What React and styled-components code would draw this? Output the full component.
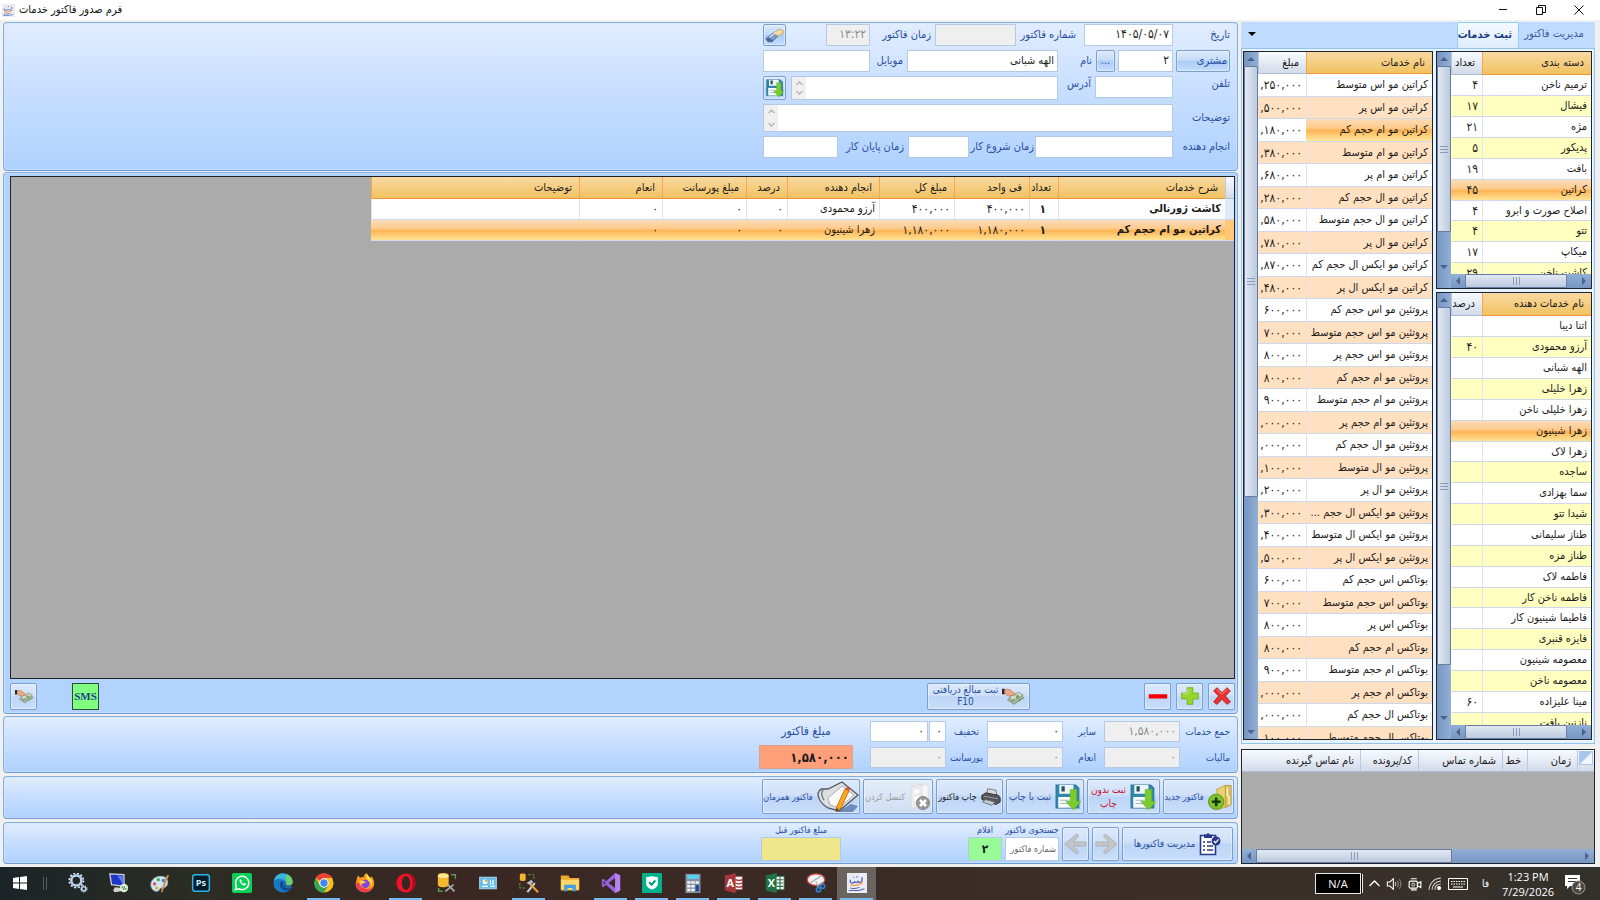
import React from "react";
import styled, { createGlobalStyle, css } from "styled-components";

const font = `"DejaVu Sans Condensed", "DejaVu Sans", sans-serif`;
const selected = "linear-gradient(#fcdcb8, #fdcb8c 40%, #feb556 52%, #fecb74 72%, #ffe89c)";
const gold = "linear-gradient(#f9d9a2, #f1c261)";
const silver = "linear-gradient(#f7fafe, #e6ebf4 50%, #d2dae8)";
const panelBlue = "linear-gradient(#e1edff, #c8dfff 45%, #afd1ff)";
const glass = "linear-gradient(#dbe9fb, #c6dcf8 45%, #abcdf7 52%, #c3dcfb)";
const paleGlass = "linear-gradient(#dce9fb, #cfe0f8 45%, #bdd5f7 52%, #c9defa)";

const GlobalStyle = createGlobalStyle`
  * { box-sizing: border-box; }
  body { margin: 0; background: #f0f0f0; font: 11px/16px ${font}; color: #1b1b1b; }
  button, input, textarea { font: inherit; color: inherit; margin: 0; }
  button { cursor: default; }
`;

/* ---------- window shell ---------- */

const Window = styled.div`
  height: 100vh;
  display: flex;
  flex-direction: column;
  overflow: hidden;
`;

const TitleBar = styled.header`
  height: 20px;
  flex: none;
  display: flex;
  align-items: center;
  background: #fff;
  padding: 0 2px;
`;

const WindowTitle = styled.h1`
  margin: 0 auto 0 4px;
  font: 11px/16px ${font};
  color: #111;
`;

const CaptionButton = styled.button`
  width: 38px;
  height: 18px;
  padding: 0;
  border: 0;
  background: none;
  display: grid;
  place-items: center;
`;

const Body = styled.div`
  flex: 1;
  min-height: 0;
  display: flex;
  gap: 3px;
  padding: 2px 5px 3px 3px;
`;

const Main = styled.main`
  flex: 1;
  min-width: 0;
  display: flex;
  flex-direction: column;
`;

const Panel = styled.section`
  flex: none;
  border: 1px solid #84aede;
  border-bottom-color: #6d9bd6;
  border-radius: 4px;
  background: ${panelBlue};
  box-shadow: inset 0 0 0 1px #d5e6ff88;
`;

/* ---------- form ---------- */

const FormPanel = styled(Panel)`
  height: 149px;
  padding: 1px 7px 0;
  display: flex;
  flex-direction: column;
  gap: 4px;
`;

const FormRow = styled.div`
  display: flex;
  align-items: ${(p) => p.$align || "center"};
  height: ${(p) => p.$h || 22}px;
`;

const FormLabel = styled.label`
  flex: none;
  width: ${(p) => p.$w}px;
  padding-right: ${(p) => p.$pad || 0}px;
  color: #2b4f9e;
  white-space: nowrap;
`;

const TextBox = styled.input`
  flex: none;
  width: ${(p) => p.$w}px;
  height: ${(p) => p.$h || 22}px;
  padding: 0 3px 2px;
  border: 1px solid #b4c9e6;
  border-radius: 0;
  background: #fff;
  text-align: right;
  direction: ${(p) => (p.$num ? "ltr" : "rtl")};
  font-size: ${(p) => (p.$num ? 12 : 11)}px;
  outline: none;
  &:disabled { background: #efefef; color: #8a8a8a; }
`;

const MemoFrame = styled.div`
  flex: none;
  width: ${(p) => p.$w}px;
  height: 100%;
  display: flex;
  border: 1px solid #b4c9e6;
  background: #fff;
`;

const MemoText = styled.textarea`
  flex: 1;
  min-width: 0;
  border: 0;
  padding: 2px;
  resize: none;
  overflow: hidden;
  background: none;
  outline: none;
`;

const MemoArrows = styled.span`
  width: 14px;
  background: #f0f0f0;
  display: flex;
  flex-direction: column;
  justify-content: space-between;
  align-items: center;
  padding: 4px 0;
`;

const GlassButton = styled.button`
  flex: none;
  width: ${(p) => p.$w}px;
  height: ${(p) => p.$h}px;
  padding: 0 2px;
  display: flex;
  align-items: center;
  justify-content: ${(p) => p.$align || "center"};
  gap: 4px;
  border: 1px solid #7d9ec9;
  border-radius: 2px;
  background: ${(p) => (p.$pale ? paleGlass : glass)};
  box-shadow: inset 0 0 0 1px #ffffff66;
  color: ${(p) => p.$color || "#2b4f9e"};
  white-space: nowrap;
  overflow: hidden;
  line-height: ${(p) => p.$line || 12}px;
  font-size: ${(p) => p.$size || 11}px;
  &:disabled { color: #9a9a9a; background: linear-gradient(#e3ecf8, #cfdff4); }
`;

const PushEnd = styled.span`
  margin-right: auto;
  display: flex;
  gap: ${(p) => p.$gap || 0}px;
`;

/* ---------- grids ---------- */

const InvoicePanel = styled(Panel)`
  flex: 1;
  min-height: 0;
  margin: 1px 0 2px;
  display: flex;
  flex-direction: column;
  padding: 3px 2px 0 6px;
  background: #b3d3ff;
`;

const InvoiceArea = styled.div`
  flex: 1;
  min-height: 0;
  overflow: hidden;
  border: 1px solid #222;
  background: #ababab;
`;

const ActionBar = styled.div`
  flex: none;
  height: 34px;
  display: flex;
  align-items: center;
  gap: 5px;
`;

const Table = styled.table`
  table-layout: fixed;
  border-collapse: separate;
  border-spacing: 0;
  width: ${(p) => (p.$w ? `${p.$w}px` : "100%")};
`;

const HeadCell = styled.th`
  height: ${(p) => p.$h || 22}px;
  padding: 0 ${(p) => p.$pad || 7}px 0 0;
  text-align: right;
  font-weight: 400;
  white-space: nowrap;
  overflow: hidden;
  ${(p) =>
    p.$gold
      ? css`background: ${gold}; border-bottom: 1px solid #f2953a; border-left: 1px solid #f4a650;`
      : css`background: ${silver}; border-bottom: 1px solid #a9bcd8; border-left: 1px solid #b5c9e4;`}
`;

const Row = styled.tr`
  height: 21px;
  background: ${(p) => (p.$selected ? selected : p.$tint || "#fff")};
  ${(p) => p.$uneven && css`&:nth-child(7n) { height: 20px; }`}
  ${(p) => p.$wide && css`height: 23px; &:nth-child(even) { height: 22px; }`}
`;

const Cell = styled.td`
  padding: 0 ${(p) => p.$pad || 4}px 0 0;
  line-height: 16px;
  white-space: nowrap;
  overflow: hidden;
  text-overflow: ${(p) => (p.$num ? "clip" : "ellipsis")};
  text-align: right;
  border-bottom: 1px solid #cfd7ea;
  border-left: 1px solid ${(p) => (p.$clean ? "transparent" : "#dde3f0")};
  direction: ${(p) => (p.$num ? "ltr" : "rtl")};
  font-size: ${(p) => (p.$num ? 12 : 11)}px;
  font-weight: ${(p) => (p.$bold ? 700 : 400)};
  ${(p) => p.$fill && css`background: ${p.$fill};`}
`;

const MarkerCell = styled.td`
  background: ${(p) => (p.$selected ? "#ffc777" : "#dfeaf8")};
  border-bottom: 1px solid #cfd7ea;
`;

const GridBox = styled.div`
  display: flex;
  min-height: 0;
  border: 1px solid #1c2430;
  background: #fff;
  ${(p) => (p.$w ? `width: ${p.$w}px;` : "")}
  ${(p) => (p.$h ? `flex: none; height: ${p.$h}px;` : "flex: 1;")}
`;

const ServicesBox = styled(GridBox)`
  flex: none;
`;

const GridColumn = styled.div`
  flex: 1;
  min-width: 0;
  display: flex;
  flex-direction: column;
`;

const Viewport = styled.div`
  flex: 1;
  min-height: 0;
  overflow: hidden;
  background: ${(p) => p.$bg || "#fff"};
`;

const Track = styled.div`
  flex: none;
  display: flex;
  direction: ltr;
  align-items: stretch;
  ${(p) =>
    p.$vertical
      ? css`width: 14px; flex-direction: column; background: linear-gradient(90deg, #7795c2, #92afd6);`
      : css`height: 14px; background: linear-gradient(#92afd6, #7795c2);`}
`;

const TrackArrow = styled.span`
  flex: none;
  width: 14px;
  height: 14px;
  display: grid;
  place-items: center;
`;

const Thumb = styled.span`
  flex: ${(p) => p.$flex} 1 0;
  display: grid;
  place-items: center;
  border: 1px solid #687ca3;
  border-radius: 1px;
  background: ${(p) =>
    p.$vertical ? "linear-gradient(90deg, #e2e9f3, #bccadf)" : "linear-gradient(#e2e9f3, #bccadf)"};
`;

const TrackRest = styled.span`
  flex: ${(p) => p.$flex} 1 0;
`;

const Corner = styled.span`
  flex: none;
  height: 14px;
`;

/* ---------- side column ---------- */

const Side = styled.aside`
  flex: none;
  width: 354px;
  display: flex;
  flex-direction: column;
  gap: 5px;
`;

const TabPanel = styled.section`
  flex: 1;
  min-height: 0;
  display: flex;
  flex-direction: column;
`;

const TabStrip = styled.div`
  flex: none;
  height: 26px;
  display: flex;
  align-items: stretch;
  background: #bfdbff;
`;

const Tab = styled.button`
  width: ${(p) => p.$w}px;
  padding: 0 6px 2px 0;
  border: 0;
  background: none;
  color: #3c5ca0;
  white-space: nowrap;
  ${(p) =>
    p.$active &&
    css`
      background: linear-gradient(#f4f9ff, #dfecfd);
      border: 1px solid #8fd0ee;
      border-bottom: 0;
      border-radius: 2px 2px 0 0;
      font-weight: 700;
      color: #1b3c86;
    `}
`;

const TabMenu = styled.button`
  margin: 0 auto 0 5px;
  width: 12px;
  padding: 0;
  border: 0;
  background: none;
`;

const TabBody = styled.div`
  flex: 1;
  min-height: 0;
  display: flex;
  gap: 3px;
  padding: 2px 2px 3px 1px;
  border: 1px solid #8fc3ea;
  background: #e9f3ff;
`;

const Stack = styled.div`
  width: 156px;
  display: flex;
  flex-direction: column;
  gap: 3px;
`;

/* ---------- lower panels ---------- */

const TotalsPanel = styled(Panel)`
  height: 57px;
  margin-bottom: 3px;
  padding: 4px 7px 0;
  display: flex;
`;

const TotalsGrid = styled.div`
  display: grid;
  grid-template-columns: 50px 76px 41px 76px 41px 76px;
  grid-auto-rows: 21px;
  row-gap: 5px;
  align-items: center;
  & > label { font-size: 10px; }
`;

const Pair = styled.span`
  display: flex;
  gap: 1px;
`;

const InvoiceTotal = styled.label`
  width: 94px;
  margin-right: 17px;
  display: flex;
  flex-direction: column;
  align-items: center;
  gap: 4px;
  font-size: 12px;
  line-height: 20px;
  color: #2b4f9e;
`;

const TotalBox = styled.input`
  width: 100%;
  height: 24px;
  padding: 0 3px;
  border: 1px solid #dca08e;
  background: #ffa07a;
  color: #1b1b1b;
  font-size: 13px;
  font-weight: 700;
  text-align: right;
  direction: ltr;
`;

const ButtonsPanel = styled(Panel)`
  height: 43px;
  margin-bottom: 3px;
  display: flex;
  align-items: center;
  gap: 3px;
  padding: 0 3px 2px;
`;

const FooterPanel = styled(Panel)`
  height: 42px;
  display: flex;
  align-items: flex-end;
  gap: 3px;
  padding: 0 4px 2px;
`;

const Stat = styled.label`
  display: flex;
  flex-direction: column;
  align-items: center;
  width: ${(p) => p.$w}px;
  margin-right: ${(p) => p.$push || 0}px;
  color: #2b4f9e;
  font-size: 9px;
  line-height: 13px;
  white-space: nowrap;
`;

const StatBox = styled.input`
  width: 100%;
  height: 24px;
  padding: 0 2px;
  border: 1px solid #b4c9e6;
  background: ${(p) => p.$bg || "#fff"};
  color: #1b1b1b;
  text-align: ${(p) => p.$align || "right"};
  font-size: ${(p) => p.$size || 9}px;
  font-weight: ${(p) => (p.$bold ? 700 : 400)};
  &::placeholder { color: #666; }
`;

const SmsButton = styled.button`
  width: 27px;
  height: 27px;
  padding: 0;
  border: 1px solid #2b4a38;
  background: #80ff80;
  color: #1d3f8c;
  font: 700 11px/16px "Liberation Serif", serif;
`;

/* ---------- taskbar ---------- */

const Taskbar = styled.footer`
  flex: none;
  height: 33px;
  display: flex;
  align-items: stretch;
  background: linear-gradient(90deg, #1b2427, #2b2d24 12%, #3a2723 28%, #3a2a25 50%, #3b3029 78%, #33312b);
  color: #fff;
`;

const TaskButton = styled.button`
  width: ${(p) => p.$w || 41}px;
  padding: 0 4px;
  border: 0;
  background: none;
  display: flex;
  flex-direction: column;
  align-items: center;
  justify-content: space-between;
  ${(p) => p.$active && css`background: linear-gradient(#6a645f, #6a645f) center / 39px 100% no-repeat;`}
  &::after {
    content: "";
    width: 33px;
    height: 2px;
    background: ${(p) => (p.$open ? "#76b9ed" : "transparent")};
  }
  & > svg { margin-top: ${(p) => p.$drop || 6}px; }
`;

const Separator = styled.span`
  width: 4px;
  height: 13px;
  margin: 10px 10px 0 4px;
  border: solid #555a58;
  border-width: 0 1px;
`;

const Tray = styled.div`
  margin-left: auto;
  display: flex;
  align-items: center;
  gap: 6px;
  padding-right: 14px;
  font: 12px/15px "Open Sans", sans-serif;
`;

const Battery = styled.span`
  width: 46px;
  height: 21px;
  display: grid;
  place-items: center;
  border: 1px solid #e8e8e8;
  background: #000;
  box-shadow: 2px 0 0 -1px #000, 3px 0 0 -1px #e8e8e8;
  font-size: 11px;
  margin-right: 2px;
`;

const Clock = styled.time`
  width: 56px;
  text-align: center;
  font-size: 11px;
  line-height: 15px;
  white-space: nowrap;
  margin: 0 2px 0 5px;
`;

const Lang = styled.span`
  font: 10px/15px ${font};
  margin-left: 8px;
`;

/* ---------- icons ---------- */

const Svg = ({ s = 20, w, h, vb = "0 0 24 24", children }) => (
  <svg width={w || s} height={h || s} viewBox={vb} fill="none" aria-hidden="true" style={{ flex: "none" }}>
    {children}
  </svg>
);

const Floppy = ({ s }) => (
  <Svg s={s}>
    <path d="M1 1h18l3 3v18H1z" fill="#2f88aa" stroke="#2a7596" />
    <path d="M4 1h13v8H4z" fill="#eef5f9" />
    <path d="M6 2h3v5H6z" fill="#24505f" />
    <path d="M3 12h13v10H3z" fill="#f8fbfc" />
    <path d="M5 15h8M5 18h8" stroke="#9bb8c4" />
    <path d="M14 5h6v11h4l-7 8-7-8h4z" fill="#7ccb2c" stroke="#66b31e" strokeWidth=".5" />
  </Svg>
);

const Eraser = () => (
  <Svg s={19}>
    <path d="M1 16l9-7 7 3-8 8H4z" fill="#7d9cc8" stroke="#4a6898" />
    <path d="M1 16l4-1 5 3-1 2H4z" fill="#46679c" />
    <path d="M10 9l8-5 5 2v3l-6 4z" fill="#f3d9a0" stroke="#b99a5a" />
    <path d="M6 14l8-6" stroke="#dbe6f5" strokeWidth="1.500" />
  </Svg>
);

const Money = ({ s = 22 }) => (
  <Svg s={s} vb="0 0 24 20">
    <path d="M6 14l12-7 6 5-11 7z" fill="#a9bf9c" stroke="#66805c" strokeWidth=".8" />
    <path d="M8 11l10-5 5 3-11 7z" fill="#cfdcc4" stroke="#71896a" strokeWidth=".8" />
    <circle cx="17" cy="11" r="2" fill="#7f9a75" />
    <path d="M10 16l4-3M18 15l3-2" stroke="#57704e" />
    <path d="M0 2h3v6H0z" fill="#26262c" />
    <path d="M3 3c4-1 7 0 9 3l3 2c0 1.500-2 1.500-3 1l-3 1c-3 0-4-1-6-3z" fill="#e9a987" stroke="#b06d4f" strokeWidth=".7" />
  </Svg>
);

const RedX = () => (
  <Svg s={20}>
    <path d="M6 2l6 6 6-6 4 4-6 6 6 7-4 3-6-6-6 6-4-3 6-7-6-6z" fill="#ee3030" stroke="#b01212" />
    <path d="M6 4l6 6 6-6" stroke="#ff9a9a" />
  </Svg>
);

const GreenPlus = () => (
  <Svg s={20}>
    <path d="M8.500 2h7v6.500H22v7h-6.500V22h-7v-6.500H2v-7h6.500z" fill="#96d52c" stroke="#71ad1c" />
    <path d="M9.500 3.500v6H3.500" stroke="#d2f391" />
  </Svg>
);

const Minus = () => (
  <Svg s={20}>
    <path d="M1 10h22v5H1z" fill="#f40000" />
  </Svg>
);

const FolderPlus = () => (
  <Svg w={25} h={28} vb="0 0 26 28">
    <path d="M9 6l9-4 1 22-8 3z" fill="#ead173" stroke="#c4a94c" />
    <path d="M18 2h6v20l-6 3z" fill="#dcc064" stroke="#b99b3e" />
    <path d="M20 4v8l2 2v8" stroke="#fff4c0" strokeWidth="1.500" />
    <circle cx="8.500" cy="19" r="8" fill="#7fc22b" stroke="#5c9a1a" />
    <path d="M8.500 14.500v9M4 19h9" stroke="#17340a" strokeWidth="2.600" />
  </Svg>
);

const Printer = () => (
  <Svg s={20}>
    <path d="M8 2l10 2 1 6-12-2z" fill="#d9dadd" stroke="#666" />
    <path d="M1 10l5-3 15 3 2 3v5l-5 3L1 15z" fill="#55565a" stroke="#2c2c2e" />
    <path d="M3 11l17 3" stroke="#a5a6aa" />
    <path d="M5 15l12 3-4 4-11-4z" fill="#c5cad0" stroke="#666" />
  </Svg>
);

const Cancel = () => (
  <Svg w={22} h={28} vb="0 0 22 28">
    <path d="M2 4l11-3v21L2 26z" fill="#ececec" stroke="#dcdcdc" />
    <path d="M13 2h6v18h-6z" fill="#f7f7f7" stroke="#e2e2e2" />
    <path d="M5 7l5-1v4l-5 1zM5 14l5-1v4l-5 1z" fill="#fff" />
    <circle cx="14" cy="20" r="6.500" fill="#979797" stroke="#858585" />
    <path d="M11 17l6 6M17 17l-6 6" stroke="#fff" strokeWidth="2.500" />
  </Svg>
);

const NotePencil = () => (
  <Svg w={42} h={32} vb="0 0 42 32">
    <path d="M20 31l14-8 7 2-5 6z" fill="#6e8dbb" />
    <path d="M1 14c0-3 2-6 4-6h6L25 1l16 13-19 16-11-3c-5-3-9-7-10-13z" fill="#dcdfe2" stroke="#55585c" strokeWidth="1.300" />
    <path d="M6 9c-2 3-1 7 1 10" stroke="#7d8186" strokeWidth="1.500" />
    <path d="M11 17L25 5l12 9-15 13-9-3z" fill="#fafafa" stroke="#a9adb2" />
    <path d="M28 8l4 2-8 17-5 4 1-6z" fill="#f9a61c" stroke="#b56c0d" strokeWidth=".8" />
    <path d="M28 8l4 2 1-2-3-2z" fill="#e2562f" />
    <path d="M19.500 27l2 1.500-2.500 2.500z" fill="#3b2a1d" />
  </Svg>
);

const Checklist = () => (
  <Svg w={22} h={24} vb="0 0 22 24">
    <path d="M1.500 3.500h15v19h-15z" fill="#fff" stroke="#27388c" strokeWidth="1.600" />
    <path d="M5 2.500h2.500L9 .8l1.500 1.700H13V6H5z" fill="#27388c" />
    <path d="M4 10h2M4 14h2M4 18h2M8 10h4M8 14h6M8 18h6" stroke="#27388c" strokeWidth="1.600" />
    <circle cx="17" cy="9" r="4.500" fill="#27388c" />
    <path d="M14.800 9l1.700 1.800 3-3.500" stroke="#fff" strokeWidth="1.300" />
  </Svg>
);

const BigArrow = ({ left }) => (
  <Svg s={24}>
    <path
      d={left ? "M1 12L12 2.500c2-1 3 1 1.500 3L9 10h13v4H9l4.500 4.500c1.500 2 .5 4-1.500 3z" : "M23 12L12 2.500c-2-1-3 1-1.500 3L15 10H2v4h13l-4.500 4.500c-1.500 2-.5 4 1.500 3z"}
      fill="#c3c5c8"
      stroke="#aeb2b6"
    />
  </Svg>
);

const AppLogo = ({ s }) => (
  <Svg s={s}>
    <path d="M0 0h24v24H0z" fill="#e9ebf7" />
    <path d="M4 8v3c2 2 5 1 5-1 1 2 3 2 4 0 1 2 4 2 5-1V5M8 5v1M12 4v1.500" stroke="#4c5db0" strokeWidth="1.500" />
    <path d="M4 14c6 2 12 0 15-3" stroke="#f0a656" strokeWidth="2" />
    <path d="M4 18c4 1 8 1 11-1M2 21h12l7-2" stroke="#5563ae" strokeWidth="1.300" />
  </Svg>
);

const Chevron = ({ up, color = "#b4b4b4" }) => (
  <Svg w={7} h={5} vb="0 0 7 5">
    <path d={up ? "M.5 4l3-3 3 3" : "M.5 1l3 3 3-3"} stroke={color} strokeWidth="1.300" />
  </Svg>
);

const Triangle = ({ dir, color = "#4c628c" }) => {
  const d = { up: "M0 6h8L4 2z", down: "M0 2h8L4 6z", left: "M6 0v8L2 4z", right: "M2 0v8l4-4z" }[dir];
  return (
    <Svg s={8} vb="0 0 8 8">
      <path d={d} fill={color} />
    </Svg>
  );
};

const Grip = ({ vertical }) => (
  <Svg s={8} vb="0 0 8 8">
    <path d={vertical ? "M0 1.500h8M0 4.500h8M0 7.500h8" : "M1.500 0v8M4.500 0v8M7.500 0v8"} stroke="#8b9ab8" />
  </Svg>
);

const taskIcons = {
  start: (
    <Svg s={14} vb="0 0 14 14">
      <path d="M0 2l6-1v5.500H0zM7 .9L14 0v6.500H7zM0 7.500h6V13l-6-1zM7 7.500h7V14l-7-1z" fill="#fff" />
    </Svg>
  ),
  gears: (
    <Svg>
      <circle cx="10" cy="9" r="6" stroke="#b9d3ee" strokeWidth="3" />
      <circle cx="10" cy="9" r="8.500" stroke="#d8e7f6" strokeWidth="2" strokeDasharray="2.500 2" />
      <circle cx="19" cy="19" r="2.500" stroke="#b9d3ee" strokeWidth="2" />
      <circle cx="19" cy="19" r="4" stroke="#d8e7f6" strokeDasharray="1.500 1.300" />
    </Svg>
  ),
  remote: (
    <Svg>
      <path d="M1 1l17 1v14L3 14z" fill="#1d36c8" stroke="#cfd3da" strokeWidth="1.500" />
      <path d="M10 3l7 1v10z" fill="#5d7cf0" />
      <path d="M7 17l9 1 3 3-12 2-2-2z" fill="#d5d5d2" />
      <circle cx="18" cy="18" r="5" fill="#e8ede4" />
      <path d="M15 18l2-2M19 20l2-2M17 20l2-4" stroke="#3d9a3a" strokeWidth="1.300" />
    </Svg>
  ),
  paint: (
    <Svg>
      <path d="M1 14C1 8 7 4 13 4s9 4 8 9-6 5-8 5-1 4-5 4-7-4-7-8z" fill="#cfe4f4" stroke="#8fb4d0" />
      <circle cx="5.500" cy="13" r="2" fill="#e3493c" />
      <circle cx="10" cy="8" r="2" fill="#49a94d" />
      <circle cx="16" cy="9" r="2" fill="#3a7fd0" />
      <circle cx="8" cy="18" r="2" fill="#f0b323" />
      <path d="M13 23l5-16 3-5 2 1-3 6-5 14z" fill="#d98d3d" />
    </Svg>
  ),
  ps: (
    <Svg>
      <rect x="2" y="2" width="20" height="20" rx="3" fill="#071d2c" stroke="#2ab6e8" strokeWidth="1.800" />
      <text x="12" y="16" fontSize="11" fontWeight="700" textAnchor="middle" fill="#cdeeff" fontFamily="Open Sans, sans-serif">Ps</text>
    </Svg>
  ),
  whatsapp: (
    <Svg>
      <rect width="24" height="24" rx="2" fill="#05cf54" />
      <path d="M4 20l1.300-4A8 8 0 1 1 8.500 19z" stroke="#fff" strokeWidth="1.800" />
      <path d="M9 8c0 4 3 7 7 7l1-2-2.500-1-1 1c-1-.5-2-1.500-2.500-2.500l1-1L10.500 7z" fill="#fff" />
    </Svg>
  ),
  edge: (
    <Svg>
      <circle cx="12" cy="12" r="11.500" fill="#1b78c9" />
      <path d="M1 10C2 3 8 0 13 .5 20 1 24 6 23.500 11c-.5 4-5 5-8 4 1-2 1-5-2-6.500S4 6 1 10z" fill="#35b4dc" />
      <path d="M16 1.500c5 2 8 6 7.500 9.500S19 16 15.500 15c1-2 1-4-.5-5.500z" fill="#6bd36e" />
      <path d="M10 10c-4 3-1 12 6 11 3 0 5-2 6-4-4 2-10 0-10-3 0-1 1-2 1-3z" fill="#124a93" />
      <path d="M24 15c-4 2-10 1.500-11-1.500l3.500 1.500c3 .8 6 0 7.500-2z" fill="#3a2723" />
    </Svg>
  ),
  chrome: (
    <Svg>
      <circle cx="12" cy="12" r="11.500" fill="#fbc116" />
      <path d="M12 12L2 6A11.500 11.500 0 0 1 22 6H12z" fill="#ea4335" />
      <path d="M12 12v11.500A11.500 11.500 0 0 1 2 6l5 9z" fill="#34a853" />
      <path d="M17 15l-5 8.500L9 23l3-6z" fill="#34a853" />
      <circle cx="12" cy="12" r="5.600" fill="#fff" />
      <circle cx="12" cy="12" r="4.400" fill="#4285f4" />
    </Svg>
  ),
  firefox: (
    <Svg>
      <path d="M2 8c0-2 1-4 2-5l2 3c2-2 4-1 5-1-1-2 1-4 3-5 0 3 3 4 5 6l1-2c3 4 4 9 2 13s-6 6-10 6C5 23 0 18 1 12z" fill="#ff9a1f" />
      <path d="M1 13c0 6 5 10 11 10 5 0 9-3 10-7-2 3-6 4-9 3-5-1-8-4-8-8z" fill="#f23b57" />
      <circle cx="12.500" cy="13" r="5" fill="#8046e0" />
      <path d="M5 10c3-2 6 0 8 1-2 2-5 1-6 3z" fill="#ffcf3b" />
      <path d="M15 1c0 3 4 4 5 8s0 6-1 8c1-5-2-7-4-9s-2-5 0-7z" fill="#ffe04a" />
    </Svg>
  ),
  opera: (
    <Svg>
      <circle cx="12" cy="12" r="11.500" fill="#f0142b" />
      <path d="M14 1c6 0 9.500 5 9.500 11S20 23 14 23c5-2 6-7 6-11S19 3 14 1z" fill="#a50b1d" />
      <ellipse cx="12" cy="12" rx="5" ry="8.500" fill="#36271f" />
    </Svg>
  ),
  db: (
    <Svg>
      <path d="M1 3c0-4 13-4 13 0v11c0 4-13 4-13 0z" fill="#f3b82c" />
      <ellipse cx="7.500" cy="3.500" rx="6.500" ry="2.500" fill="#fde69a" />
      <path d="M17 2h5v5M2 18v4h5" stroke="#5a9a4e" strokeWidth="1.800" />
      <path d="M10 22l10-8M13 14l8 8" stroke="#a8adb3" strokeWidth="2" />
    </Svg>
  ),
  panel: (
    <Svg>
      <rect x="2" y="5" width="20" height="14" fill="#65bdec" stroke="#b4e2f8" />
      <circle cx="8.500" cy="10.500" r="3" fill="#f4fbff" />
      <path d="M8.500 10.500v-3a3 3 0 0 1 3 3z" fill="#f0a92c" />
      <path d="M5 16h7M15 9v5M18 8v6M15 16h5" stroke="#fff" strokeWidth="1.400" />
    </Svg>
  ),
  tools: (
    <Svg>
      <path d="M1 2c0-2 7-2 7 0v6c0 2-7 2-7 0z" fill="#f3b82c" />
      <path d="M11 2h7v6M1 12v6h6" stroke="#5a9a4e" strokeWidth="1.300" strokeDasharray="3 1.500" />
      <path d="M10 23l9-11" stroke="#c9ced4" strokeWidth="2.500" />
      <path d="M13 13l10 10" stroke="#e8a23a" strokeWidth="2.500" />
      <path d="M9 12l6-4 2 3-4 3z" fill="#b6bcc3" />
    </Svg>
  ),
  folder: (
    <Svg>
      <path d="M1 3h9l2 3h11v15H1z" fill="#e9a92a" />
      <path d="M1 8h22v12H1z" fill="#fdd667" />
      <path d="M5 22v-8h14v8h-4v-4H9v4z" fill="#3f9fe0" />
    </Svg>
  ),
  vs: (
    <Svg>
      <path d="M17 0l6 3v18l-6 3L6 14l-3 3-2-1V8l2-1 3 3z" fill="#9b62dd" />
      <path d="M17 6v12l-8-6z" fill="#33291f" />
      <path d="M17 0l6 3v18l-6 3z" fill="#b584ee" />
      <path d="M3 9.500v5L5.500 12z" fill="#33291f" />
    </Svg>
  ),
  shield: (
    <Svg>
      <rect width="24" height="24" fill="#00b28a" />
      <path d="M5 5l7-1 7 1v8c0 4-4 6-7 7-3-1-7-3-7-7z" fill="#fff" />
      <path d="M8.500 11l3 3L16 9" stroke="#00a07c" strokeWidth="2.500" />
    </Svg>
  ),
  calc: (
    <Svg>
      <rect x="3" y="1" width="18" height="23" fill="#84919e" />
      <rect x="5" y="2.500" width="14" height="4.500" fill="#55d3f5" />
      <path d="M5 10h4v3H5zM10 10h4v3h-4zM5 14.500h4v3H5zM10 14.500h4v3h-4zM5 19h4v3H5zM10 19h4v3h-4zM15 10h4v3h-4z" fill="#f1f4f6" />
      <path d="M15 14.500h4V22h-4z" fill="#1a4c9a" />
    </Svg>
  ),
  access: (
    <Svg>
      <path d="M12 4h10v16H12z" fill="#fff" stroke="#a4373a" />
      <path d="M14 8c2 1 6 1 8 0M14 12c2 1 6 1 8 0M14 16c2 1 6 1 8 0" stroke="#a4373a" strokeWidth="1.500" />
      <path d="M1 3l13-3v24L1 21z" fill="#a4373a" />
      <text x="7.500" y="17" fontSize="13" fontWeight="700" textAnchor="middle" fill="#fff" fontFamily="Open Sans, sans-serif">A</text>
    </Svg>
  ),
  excel: (
    <Svg>
      <path d="M12 4h11v16H12z" fill="#fff" stroke="#217346" />
      <path d="M14 8h8M14 12h8M14 16h8M18 4v16" stroke="#217346" strokeWidth="1.300" />
      <path d="M1 3l13-3v24L1 21z" fill="#217346" />
      <text x="7.500" y="17" fontSize="13" fontWeight="700" textAnchor="middle" fill="#fff" fontFamily="Open Sans, sans-serif">X</text>
    </Svg>
  ),
  snip: (
    <Svg>
      <ellipse cx="12" cy="8" rx="10.500" ry="7" fill="#f3f3f3" stroke="#d8453c" strokeWidth="1.600" />
      <path d="M5 12L19 3" stroke="#aaa" strokeWidth="1.500" />
      <path d="M12 10l3 8M21 10l-7 5" stroke="#b5bbc0" strokeWidth="1.500" />
      <circle cx="15" cy="20" r="2.500" stroke="#2d7fd0" strokeWidth="2" />
      <circle cx="20" cy="16" r="2.500" stroke="#2d7fd0" strokeWidth="2" />
    </Svg>
  ),
  app: <AppLogo s={20} />,
};

/* ---------- data ---------- */

const categories = [
  ["ترمیم ناخن", "۴"], ["فیشال", "۱۷"], ["مژه", "۲۱"], ["پدیکور", "۵"], ["بافت", "۱۹"],
  ["کراتین", "۴۵"], ["اصلاح صورت و ابرو", "۴"], ["تتو", "۴"], ["میکاپ", "۱۷"], ["کاشت ناخن", "۲۹"],
];

const providers = [
  ["اتنا دیبا"], ["آرزو محمودی", "۴۰"], ["الهه شبانی"], ["زهرا خلیلی"], ["زهرا خلیلی ناخن"],
  ["زهرا شینیون"], ["زهرا لاک"], ["ساجده"], ["سما بهزادی"], ["شیدا تتو"], ["طناز سلیمانی"],
  ["طناز مزه"], ["فاطمه لاک"], ["فاطمه ناخن کار"], ["فاطیما شینیون کار"], ["فایزه قنبری"],
  ["معصومه شینیون"], ["معصومه ناخن"], ["مینا علیزاده", "۶۰"], ["نازنین بافت"],
];

const services = [
  ["کراتین مو اس متوسط", ",۲۵۰,۰۰۰"], ["کراتین مو اس پر", ",۵۰۰,۰۰۰"],
  ["کراتین مو ام حجم کم", ",۱۸۰,۰۰۰"], ["کراتین مو ام متوسط", ",۳۸۰,۰۰۰"],
  ["کراتین مو ام پر", ",۶۸۰,۰۰۰"], ["کراتین مو ال حجم کم", ",۲۸۰,۰۰۰"],
  ["کراتین مو ال حجم متوسط", ",۵۸۰,۰۰۰"], ["کراتین مو ال پر", ",۷۸۰,۰۰۰"],
  ["کراتین مو ایکس ال حجم کم", ",۸۷۰,۰۰۰"], ["کراتین مو ایکس ال پر", ",۴۸۰,۰۰۰"],
  ["پروتئین مو اس حجم کم", "۶۰۰,۰۰۰"], ["پروتئین مو اس حجم متوسط", "۷۰۰,۰۰۰"],
  ["پروتئین مو اس حجم پر", "۸۰۰,۰۰۰"], ["پروتئین مو ام حجم کم", "۸۰۰,۰۰۰"],
  ["پروتئین مو ام حجم متوسط", "۹۰۰,۰۰۰"], ["پروتئین مو ام حجم پر", ",۰۰۰,۰۰۰"],
  ["پروتئین مو ال حجم کم", ",۰۰۰,۰۰۰"], ["پروتئین مو ال متوسط", ",۱۰۰,۰۰۰"],
  ["پروتئین مو ال پر", ",۲۰۰,۰۰۰"], ["پروتئین مو ایکس ال حجم ...", ",۳۰۰,۰۰۰"],
  ["پروتئین مو ایکس ال  متوسط", ",۴۰۰,۰۰۰"], ["پروتئین مو ایکس ال پر", ",۵۰۰,۰۰۰"],
  ["بوتاکس اس حجم کم", "۶۰۰,۰۰۰"], ["بوتاکس اس حجم متوسط", "۷۰۰,۰۰۰"],
  ["بوتاکس اس پر", "۸۰۰,۰۰۰"], ["بوتاکس ام حجم کم", "۸۰۰,۰۰۰"],
  ["بوتاکس ام حجم متوسط", "۹۰۰,۰۰۰"], ["بوتاکس ام حجم پر", ",۰۰۰,۰۰۰"],
  ["بوتاکس ال حجم کم", ",۰۰۰,۰۰۰"], ["بوتاکس ال حجم متوسط", "۱۰۰,۰۰۰"],
];

const invoiceColumns = [
  ["شرح خدمات", 167], ["تعداد", 29], ["فی واحد", 75], ["مبلغ کل", 75], ["انجام دهنده", 92],
  ["درصد", 41], ["مبلغ پورسانت", 84], ["انعام", 83], ["توضیحات", 208],
];

const invoiceRows = [
  ["کاشت ژورنالی", "۱", "۴۰۰,۰۰۰", "۴۰۰,۰۰۰", "آرزو محمودی", "۰", "۰", "۰", ""],
  ["کراتین مو ام حجم کم", "۱", "۱,۱۸۰,۰۰۰", "۱,۱۸۰,۰۰۰", "زهرا شینیون", "۰", "۰", "۰", ""],
];

const callColumns = [["زمان", 50], ["خط", 25], ["شماره تماس", 84], ["کد/پرونده", 58], ["نام تماس گیرنده", 119]];

const tasks = [
  ["تنظیمات", "gears"], ["Remote Desktop", "remote"], ["Paint", "paint"], ["Photoshop", "ps"],
  ["WhatsApp", "whatsapp"], ["Edge", "edge"], ["Chrome", "chrome", true], ["Firefox", "firefox"],
  ["Opera", "opera", true], ["Database", "db"], ["Control Panel", "panel"], ["SQL Tools", "tools", true],
  ["File Explorer", "folder"], ["Visual Studio", "vs", true], ["Security", "shield", true],
  ["Calculator", "calc", true], ["Access", "access", true], ["Excel", "excel", true],
  ["Snipping Tool", "snip", true], ["فرم صدور فاکتور", "app", true, true],
];

/* ---------- composed parts ---------- */

function ScrollBar({ vertical, corner, thumb, rest }) {
  return (
    <Track $vertical={vertical}>
      <TrackArrow><Triangle dir={vertical ? "up" : "left"} /></TrackArrow>
      <Thumb $flex={thumb} $vertical={vertical}><Grip vertical={vertical} /></Thumb>
      <TrackRest $flex={rest} />
      <TrackArrow><Triangle dir={vertical ? "down" : "right"} /></TrackArrow>
      {corner && <Corner />}
    </Track>
  );
}

function PickList({ heads, rows, widths, current, tint, wide, nameOnly }) {
  const headHeight = wide ? 22 : 23;
  return (
    <Table>
      <colgroup>{widths.map((w, i) => <col key={i} width={w} />)}</colgroup>
      <thead>
        <tr>
          <HeadCell $gold $h={headHeight}>{heads[0]}</HeadCell>
          <HeadCell $h={headHeight}>{heads[1]}</HeadCell>
        </tr>
      </thead>
      <tbody>
        {rows.map(([name, value], i) => {
          const on = i === current;
          return (
            <Row key={i} $uneven={!wide} $wide={wide} $selected={on && !nameOnly} $tint={i % 2 ? tint : "#fff"}>
              <Cell $clean={on} $fill={on && nameOnly ? selected : null}>{name}</Cell>
              <Cell $num $clean>{value}</Cell>
            </Row>
          );
        })}
      </tbody>
    </Table>
  );
}

function Memo({ id, w }) {
  return (
    <MemoFrame $w={w}>
      <MemoText id={id} rows={1} />
      <MemoArrows><Chevron up /><Chevron /></MemoArrows>
    </MemoFrame>
  );
}

function InvoiceForm() {
  return (
    <FormPanel as="form">
      <FormRow>
        <FormLabel htmlFor="date" $w={57}>تاریخ</FormLabel>
        <TextBox id="date" $w={89} $num defaultValue="۱۴۰۵/۰۵/۰۷" />
        <FormLabel htmlFor="no" $w={68} $pad={8}>شماره فاکتور</FormLabel>
        <TextBox id="no" $w={81} disabled />
        <FormLabel htmlFor="time" $w={65} $pad={4}>زمان فاکتور</FormLabel>
        <TextBox id="time" $w={44} $num disabled defaultValue="۱۳:۲۲" />
        <FormLabel as="span" $w={40} />
        <GlassButton type="button" $w={23} $h={22} aria-label="پاک کردن"><Eraser /></GlassButton>
      </FormRow>
      <FormRow>
        <GlassButton type="button" $w={54} $h={22} $align="flex-start">مشتری</GlassButton>
        <FormLabel as="span" $w={3} />
        <TextBox aria-label="کد مشتری" $w={55} $num defaultValue="۲" />
        <FormLabel as="span" $w={3} />
        <GlassButton type="button" $w={19} $h={22}>...</GlassButton>
        <FormLabel htmlFor="name" $w={38} $pad={4}>نام</FormLabel>
        <TextBox id="name" $w={151} defaultValue="الهه شبانی" />
        <FormLabel htmlFor="mobile" $w={37} $pad={4}>موبایل</FormLabel>
        <TextBox id="mobile" $w={107} />
      </FormRow>
      <FormRow $h={24} $align="flex-start">
        <FormLabel htmlFor="tel" $w={57}>تلفن</FormLabel>
        <TextBox id="tel" $w={78} />
        <FormLabel htmlFor="address" $w={37} $pad={4}>آدرس</FormLabel>
        <Memo id="address" w={267} />
        <FormLabel as="span" $w={5} />
        <GlassButton type="button" $w={23} $h={24} aria-label="ذخیره مشتری"><Floppy s={18} /></GlassButton>
      </FormRow>
      <FormRow $h={28}>
        <FormLabel htmlFor="notes" $w={57}>توضیحات</FormLabel>
        <Memo id="notes" w={410} />
      </FormRow>
      <FormRow>
        <FormLabel htmlFor="agent" $w={57}>انجام دهنده</FormLabel>
        <TextBox id="agent" $w={138} />
        <FormLabel htmlFor="start" $w={66} $pad={1}>زمان شروع کار</FormLabel>
        <TextBox id="start" $w={61} />
        <FormLabel htmlFor="end" $w={70} $pad={4}>زمان پایان کار</FormLabel>
        <TextBox id="end" $w={75} />
      </FormRow>
    </FormPanel>
  );
}

function InvoiceGrid() {
  return (
    <InvoiceArea>
      <Table $w={863}>
        <colgroup>
          <col width={9} />
          {invoiceColumns.map(([n, w]) => <col key={n} width={w} />)}
        </colgroup>
        <thead>
          <tr>
            <HeadCell aria-label="نشانگر" />
            {invoiceColumns.map(([n]) => <HeadCell key={n} $gold>{n}</HeadCell>)}
          </tr>
        </thead>
        <tbody>
          {invoiceRows.map((row, i) => (
            <Row key={i} $selected={i === 1}>
              <MarkerCell $selected={i === 1} />
              {row.map((v, c) => (
                <Cell key={c} $num={c !== 0 && c !== 4} $bold={c < 2} $pad={c === 1 ? 12 : 4} $clean={i === 1}>{v}</Cell>
              ))}
            </Row>
          ))}
        </tbody>
      </Table>
    </InvoiceArea>
  );
}

const ReceiveGroup = styled.span`
  margin-right: 109px;
`;

function Totals() {
  return (
    <TotalsPanel>
      <TotalsGrid>
        <FormLabel htmlFor="sum">جمع خدمات</FormLabel>
        <TextBox id="sum" $w={76} $h={21} $num disabled defaultValue="۱,۵۸۰,۰۰۰" />
        <FormLabel htmlFor="other" $pad={8}>سایر</FormLabel>
        <TextBox id="other" $w={76} $h={21} $num defaultValue="۰" />
        <FormLabel htmlFor="disc" $pad={8}>تخفیف</FormLabel>
        <Pair>
          <TextBox id="disc" $w={17} $h={21} $num defaultValue="۰" />
          <TextBox aria-label="مبلغ تخفیف" $w={58} $h={21} $num defaultValue="۰" />
        </Pair>
        <FormLabel htmlFor="tax">مالیات</FormLabel>
        <TextBox id="tax" $w={76} $h={21} $num disabled defaultValue="۰" />
        <FormLabel htmlFor="tip" $pad={8}>انعام</FormLabel>
        <TextBox id="tip" $w={76} $h={21} $num disabled defaultValue="۰" />
        <FormLabel htmlFor="commission" $pad={4}>پورسانت</FormLabel>
        <TextBox id="commission" $w={76} $h={21} $num disabled defaultValue="۰" />
      </TotalsGrid>
      <InvoiceTotal>
        مبلغ فاکتور
        <TotalBox readOnly value="۱,۵۸۰,۰۰۰" />
      </InvoiceTotal>
    </TotalsPanel>
  );
}

export default function App() {
  return (
    <Window dir="rtl" lang="fa">
      <GlobalStyle />
      <TitleBar dir="ltr">
        <AppLogo s={13} />
        <WindowTitle dir="rtl">فرم صدور فاکتور خدمات</WindowTitle>
        <CaptionButton aria-label="Minimize">
          <Svg s={10} vb="0 0 10 10"><path d="M1 4.500h8" stroke="#111" /></Svg>
        </CaptionButton>
        <CaptionButton aria-label="Restore">
          <Svg s={10} vb="0 0 10 10"><path d="M.5 2.500h6v7h-6zM2.500 2.500v-2h7v7h-3" stroke="#111" /></Svg>
        </CaptionButton>
        <CaptionButton aria-label="Close">
          <Svg s={10} vb="0 0 10 10"><path d="M.5 .5l9 9M9.500 .5l-9 9" stroke="#111" /></Svg>
        </CaptionButton>
      </TitleBar>

      <Body>
        <Side>
          <TabPanel>
            <TabStrip role="tablist">
              <Tab role="tab" $w={76}>مدیریت فاکتور</Tab>
              <Tab role="tab" aria-selected="true" $active $w={62}>ثبت خدمات</Tab>
              <TabMenu aria-label="زبانه ها"><Triangle dir="down" color="#000" /></TabMenu>
            </TabStrip>
            <TabBody>
              <Stack>
                <GridBox $h={238}>
                  <GridColumn>
                    <Viewport>
                      <PickList heads={["دسته بندی", "تعداد"]} widths={[109, 31]} rows={categories} current={5} tint="#ffffc0" />
                    </Viewport>
                    <ScrollBar thumb={102} rest={10} />
                  </GridColumn>
                  <ScrollBar vertical corner thumb={166} rest={28} />
                </GridBox>
                <GridBox>
                  <GridColumn>
                    <Viewport>
                      <PickList heads={["نام خدمات دهنده", "درصد"]} widths={[109, 31]} rows={providers} current={5} tint="#ffffc0" />
                    </Viewport>
                    <ScrollBar thumb={102} rest={10} />
                  </GridColumn>
                  <ScrollBar vertical corner thumb={357} rest={46} />
                </GridBox>
              </Stack>
              <ServicesBox $w={190}>
                <GridColumn>
                  <Viewport>
                    <PickList heads={["نام خدمات", "مبلغ"]} widths={[126, 48]} rows={services} current={2} tint="#ffe0c0" wide nameOnly />
                  </Viewport>
                </GridColumn>
                <ScrollBar vertical thumb={430} rest={229} />
              </ServicesBox>
            </TabBody>
          </TabPanel>
          <GridBox $h={115}>
            <GridColumn>
              <Viewport $bg="#ababab">
                <Table>
                  <colgroup>
                    <col width={17} />
                    {callColumns.map(([n, w]) => <col key={n} width={w} />)}
                  </colgroup>
                  <thead>
                    <tr>
                      <HeadCell $pad={1} aria-label="همه">
                        <Svg s={14} vb="0 0 14 14"><path d="M0 0h14v14H0z" fill="#a9c7ee" /><path d="M1 13L13 1v12z" fill="#f2f5fa" /></Svg>
                      </HeadCell>
                      {callColumns.map(([n]) => <HeadCell key={n} $pad={6}>{n}</HeadCell>)}
                    </tr>
                  </thead>
                </Table>
              </Viewport>
              <ScrollBar thumb={195} rest={128} />
            </GridColumn>
          </GridBox>
        </Side>

        <Main>
          <InvoiceForm />
          <InvoicePanel>
            <InvoiceGrid />
            <ActionBar>
              <GlassButton $pale $w={27} $h={27} aria-label="حذف"><RedX /></GlassButton>
              <GlassButton $pale $w={27} $h={27} aria-label="افزودن"><GreenPlus /></GlassButton>
              <GlassButton $pale $w={27} $h={27} aria-label="کم کردن"><Minus /></GlassButton>
              <ReceiveGroup>
                <GlassButton $pale $w={103} $h={27} $size={10}>
                  <Money />
                  <span>ثبت مبالغ دریافتی<br />F10</span>
                </GlassButton>
              </ReceiveGroup>
              <PushEnd $gap={35}>
                <SmsButton>SMS</SmsButton>
                <GlassButton $pale $w={27} $h={27} aria-label="دریافت"><Money s={18} /></GlassButton>
              </PushEnd>
            </ActionBar>
          </InvoicePanel>
          <Totals />
          <ButtonsPanel>
            <GlassButton $pale $w={71} $h={35} $size={9}><FolderPlus />فاکتور جدید</GlassButton>
            <GlassButton $pale $w={73} $h={35} $size={10} $line={14} $color="#c4122f"><Floppy s={26} /><span>ثبت بدون<br />چاپ</span></GlassButton>
            <GlassButton $pale $w={78} $h={35} $size={10}><Floppy s={26} />ثبت با چاپ</GlassButton>
            <GlassButton $pale $w={67} $h={35} $size={9} $color="#1b1b1b"><Printer />چاپ فاکتور</GlassButton>
            <GlassButton $w={70} $h={35} $size={9} disabled><Cancel />کنسل کردن</GlassButton>
            <GlassButton $pale $w={98} $h={35} $size={9}><NotePencil />فاکتور همزمان</GlassButton>
          </ButtonsPanel>
          <FooterPanel>
            <GlassButton $pale $w={111} $h={34} $size={10}><Checklist />مدیریت فاکتورها</GlassButton>
            <GlassButton $pale $w={27} $h={34} aria-label="بعدی"><BigArrow /></GlassButton>
            <GlassButton $pale $w={27} $h={34} aria-label="قبلی"><BigArrow left /></GlassButton>
            <Stat $w={54}>جستجوی فاکتور<StatBox placeholder="شماره فاکتور" /></Stat>
            <Stat $w={34}>اقلام<StatBox readOnly value="۲" $bg="#98fb98" $align="center" $size={12} $bold /></Stat>
            <Stat $w={80} $push={124}>مبلغ فاکتور قبل<StatBox readOnly value="" $bg="#f0e68c" /></Stat>
          </FooterPanel>
        </Main>
      </Body>

      <Taskbar dir="ltr">
        <TaskButton $w={39} $drop={9} aria-label="Start">{taskIcons.start}</TaskButton>
        <Separator />
        {tasks.map(([label, icon, open, active]) => (
          <TaskButton key={label} aria-label={label} $open={open} $active={active}>{taskIcons[icon]}</TaskButton>
        ))}
        <Tray>
          <Battery>N/A</Battery>
          <Svg w={11} h={7} vb="0 0 11 7"><path d="M.5 6l5-5 5 5" stroke="#fff" strokeWidth="1.300" /></Svg>
          <Svg s={16}><path d="M2 9h4l5-5v16l-5-5H2z" stroke="#fff" strokeWidth="1.600" /><path d="M14 9c1 2 1 4 0 6" stroke="#ddd" strokeWidth="1.400" /><path d="M17 7c2 3 2 7 0 10M20 5c3 4 3 10 0 14" stroke="#999" strokeWidth="1.400" /></Svg>
          <Svg s={14}><rect x="2" y="7" width="14" height="12" rx="2" stroke="#fff" strokeWidth="2" /><path d="M16 11l6-3v10l-6-3M5 3h10M5 22h10" stroke="#fff" strokeWidth="2" /><circle cx="9" cy="13" r="2.500" stroke="#fff" strokeWidth="1.500" /></Svg>
          <Svg s={14}><path d="M2 22C2 11 11 2 22 2M7 22c0-8 7-15 15-15M12 22c0-6 4-10 10-10" stroke="#ccc" strokeWidth="2" /><circle cx="19" cy="19" r="3.500" fill="#fff" /></Svg>
          <Svg w={20} h={12} vb="0 0 20 12"><path d="M.5 .5h19v11H.5z" stroke="#fff" /><path d="M3 3.500h14M3 6h14" stroke="#fff" strokeDasharray="1.500 1" /><path d="M5 9h10" stroke="#fff" /></Svg>
          <Lang dir="rtl">فا</Lang>
          <Clock>1:23 PM<br />7/29/2026</Clock>
          <Svg w={22} h={22} vb="0 0 22 22">
            <path d="M1 2h15v11H6l-3 3v-3H1z" fill="#fff" />
            <path d="M4 5.500h9M4 8.500h9" stroke="#3a342e" />
            <circle cx="14.500" cy="14.500" r="6.500" fill="#4b4742" stroke="#99948e" />
            <text x="14.500" y="18" fontSize="10" textAnchor="middle" fill="#fff" fontFamily="Open Sans, sans-serif">4</text>
          </Svg>
        </Tray>
      </Taskbar>
    </Window>
  );
}
